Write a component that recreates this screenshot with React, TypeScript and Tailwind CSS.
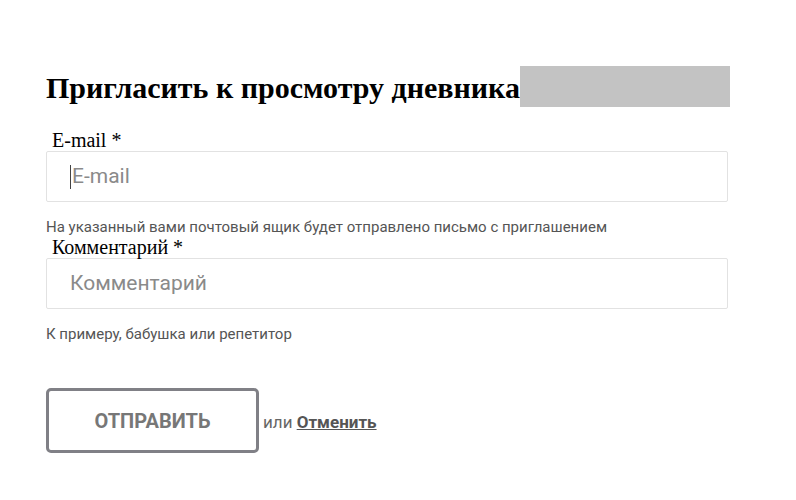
import React from "react";

const serif = "font-['Liberation_Serif','Times_New_Roman',serif]";
const sans = "font-['Roboto','Liberation_Sans',sans-serif]";

function Field({
  label,
  placeholder,
  hint,
  focused,
}: {
  label: string;
  placeholder: string;
  hint: string;
  focused?: boolean;
}) {
  return (
    <div>
      <label className={`${serif} block pl-[6px] text-[20px] leading-[22px] text-black`}>
        {label}
      </label>
      <div className="flex h-[51px] items-center rounded-[2px] border border-[#e2e2e2] bg-white pl-[23px]">
        {focused && <span className="mr-[1px] h-[24px] w-px bg-[#444]" />}
        <span className={`${sans} text-[21px] text-[#8a8a8a]`}>{placeholder}</span>
      </div>
      <p className={`${sans} mt-[16px] text-[15px] leading-[18px] text-[#555]`}>{hint}</p>
    </div>
  );
}

export default function App() {
  return (
    <div className="min-h-screen bg-white pl-[46px] pr-[68px] pt-[66px]">
      <div className="flex items-start whitespace-nowrap">
        <h2 className={`${serif} shrink-0 pt-[3px] text-[30px] font-bold leading-[38px] text-black`}>
          Пригласить к просмотру дневника
        </h2>
        <div className="h-[41px] w-[210px] shrink-0 bg-[#c3c3c3]" />
      </div>

      <div className="mt-[22px] flex flex-col">
        <Field
          label="E-mail *"
          placeholder="E-mail"
          hint="На указанный вами почтовый ящик будет отправлено письмо с приглашением"
          focused
        />
        <Field
          label="Комментарий *"
          placeholder="Комментарий"
          hint="К примеру, бабушка или репетитор"
        />
      </div>

      <div className="mt-[45px] flex items-center">
        <button
          type="button"
          className={`${sans} h-[65px] w-[213px] rounded-[5px] border-[3px] border-[#808086] bg-white text-[20px] font-bold text-[#777]`}
        >
          ОТПРАВИТЬ
        </button>
        <span className={`${sans} ml-[4px] pt-[4px] text-[17px] text-[#666]`}>
          или{" "}
          <a href="#" className="font-bold text-[#555] underline">
            Отменить
          </a>
        </span>
      </div>
    </div>
  );
}
